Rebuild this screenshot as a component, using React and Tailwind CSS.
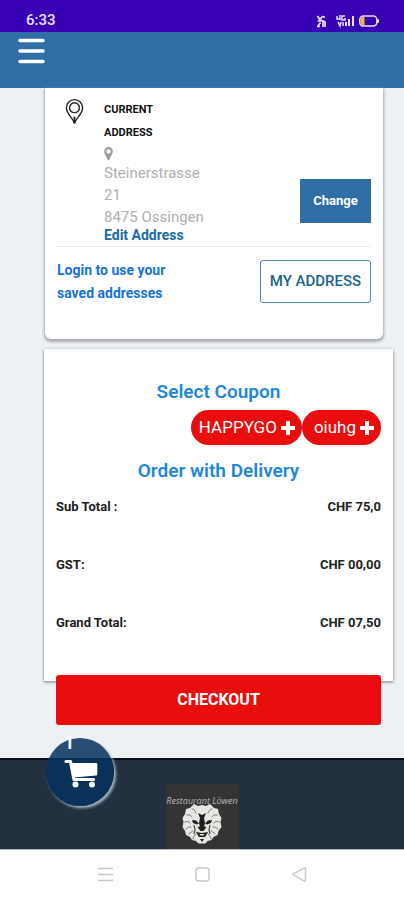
import React from "react";

function StatusBar() {
  return (
    <div className="flex h-8 items-end justify-between bg-[#3700b3] pr-6 pb-1 pl-[26px] text-[#e9e0ff]">
      <span className="text-[15px] leading-4 font-medium">6:33</span>
      <svg width="64" height="14" viewBox="0 0 64 14" fill="none" aria-hidden="true">
        <g stroke="#e9e0ff" strokeWidth="1.700">
          <path d="M1.500 2l3 4.500M7 2L3 6M1.500 7h4M1.500 12.500l3-4M7 7v6M8 2v2M5 6l4 2v5M1 12.500h3" />
          <path d="M21 2v3h3M24 1v5M29 2h-3v4h3V4M22 8l2 4 1-4M27 8v4" strokeWidth="1.500" />
        </g>
        <g fill="#e9e0ff">
          <rect x="29" y="8" width="2" height="4" />
          <rect x="32" y="5" width="2" height="7" />
          <rect x="36" y="2" width="2" height="10" />
          <rect x="61" y="5" width="2" height="4" rx="1" />
        </g>
        <rect x="43.800" y="2" width="17" height="10" rx="3.500" stroke="#e9e0ff" strokeWidth="1.500" />
        <path d="M47 3h1.500v8H47a2.500 2.500 0 0 1-2.500-2.500v-3A2.500 2.500 0 0 1 47 3z" fill="#f5b62e" />
      </svg>
    </div>
  );
}

function Header() {
  return (
    <header className="h-14 bg-[#2f6fa5] px-[18px] pt-1">
      <button type="button" aria-label="Open menu" className="block">
        <svg width="27" height="30" viewBox="0 0 27 30" stroke="#fff" strokeWidth="3.500" strokeLinecap="round">
          <path d="M2 4.500h23M2 15h23M2 25.500h23" />
        </svg>
      </button>
    </header>
  );
}

function AddressCard() {
  return (
    <section className="mr-[10px] ml-px rounded-b-md bg-white pr-3 pb-[34px] pl-3 shadow-[0_2px_3px_1px_#a9abad]">
      <div className="flex items-end justify-between border-b border-[#e8e8e8] pt-[10px] pb-1">
        <div className="flex">
          <svg className="mr-5 ml-2" width="19" height="27" viewBox="0 0 20 27" fill="none" stroke="#222" strokeWidth="1.500">
            <path d="M10 26C9 21 1.500 16.500 1.500 9.500a8.500 8.500 0 0 1 17 0C18.500 16.500 11 21 10 26z" />
            <circle cx="10" cy="9.500" r="5.200" />
            <path d="M10 19v7" strokeWidth="2" />
          </svg>
          <div className="w-[101px]">
            <h2 className="text-[11px] leading-[23px] font-bold text-[#111]">
              CURRENT
              <br />
              ADDRESS
            </h2>
            <svg className="mt-[3px] mb-px" width="9" height="14" viewBox="0 0 9 14" aria-hidden="true">
              <path fillRule="evenodd" fill="#9c9c9c" d="M4.500 0A4.300 4.300 0 0 0 .2 4.400C.2 6 1 7 3.600 12.500c.4.900 1.400.9 1.800 0C8 7 8.800 6 8.800 4.400A4.300 4.300 0 0 0 4.500 0zm0 2.200a2.200 2.200 0 1 1 0 4.400 2.200 2.200 0 0 1 0-4.400z" />
            </svg>
            <address className="text-[15px] leading-[22px] text-[#b0b0b0] not-italic">
              Steinerstrasse
              <br />
              21
              <br />
              8475 Ossingen
            </address>
            <a href="#edit" className="block text-sm leading-[14px] font-bold text-[#1b6ca5]">
              Edit Address
            </a>
          </div>
        </div>
        <button type="button" className="mb-[19px] h-11 w-[71px] bg-[#2f6fa5] text-[13px] font-bold text-white">
          Change
        </button>
      </div>
      <div className="flex justify-between pt-3">
        <p className="w-32 text-sm leading-[23px] font-bold text-[#1673dc]">Login to use your saved addresses</p>
        <button type="button" className="mt-px h-[43px] w-[111px] rounded-[3px] border border-[#4f86ad] text-[15px] font-medium text-[#22638f]">
          MY ADDRESS
        </button>
      </div>
    </section>
  );
}

function Coupon({ code, className }) {
  return (
    <button type="button" className={"flex h-[35px] items-center gap-1 rounded-full bg-[#ea0d0d] text-[17px] text-white " + className}>
      {code}
      <svg width="14" height="14" viewBox="0 0 14 14" stroke="#fff" strokeWidth="4" aria-hidden="true">
        <path d="M7 0v14M0 7h14" />
      </svg>
    </button>
  );
}

const totals = [
  ["Sub Total :", "CHF 75,0"],
  ["GST:", "CHF 00,00"],
  ["Grand Total:", "CHF 07,50"],
];

function OrderCard() {
  return (
    <section className="mt-[10px] bg-white px-3 pt-[31px] pb-12 shadow-[0_1px_3px_#777]">
      <h2 className="text-center text-[19px] leading-6 font-semibold text-[#1e87db]">Select Coupon</h2>
      <div className="mt-[6px] flex justify-end">
        <Coupon code="HAPPYGO" className="pr-[7px] pl-2" />
        <Coupon code="oiuhg" className="pr-[7px] pl-3" />
      </div>
      <h2 className="mt-[14px] text-center text-[19px] leading-6 font-semibold text-[#1e87db]">Order with Delivery</h2>
      <dl className="mt-[14px] flex flex-col gap-[38px] text-[13px] leading-5 font-bold text-[#222]">
        {totals.map(([label, value]) => (
          <div key={label} className="flex justify-between">
            <dt>{label}</dt>
            <dd>{value}</dd>
          </div>
        ))}
      </dl>
    </section>
  );
}

function CartButton() {
  return (
    <button type="button" aria-label="Cart, 1 item" className="absolute -top-[22px] left-[46px] h-[68px] w-[68px] rounded-full bg-[#06315c]/85 shadow-[2px_2px_3px_#a9bac8]">
      <span className="absolute -top-1 left-[18px] text-lg leading-[18px] font-bold text-white">1</span>
      <svg className="absolute top-[21px] left-[18px]" width="34" height="30" viewBox="0 0 34 30" fill="none" aria-hidden="true">
        <path d="M2 2.500h4.500L10 20.500h19.500" stroke="#fff" strokeWidth="3.200" strokeLinecap="round" strokeLinejoin="round" />
        <path d="M7 4h25c.8 0 1.300.5 1.300 1.200v10c0 .7-.4 1.200-1 1.300L10 18.500z" fill="#fff" />
        <circle cx="11.500" cy="25.500" r="3" fill="#fff" />
        <circle cx="28" cy="25.500" r="3" fill="#fff" />
      </svg>
    </button>
  );
}

function LionLogo() {
  return (
    <div className="flex h-[65px] w-[73px] flex-col items-center bg-[#343434] pt-3">
      <span className="font-['Open_Sans',sans-serif] text-[9px] leading-[10px] whitespace-nowrap text-[#b9b9b9] italic">Restaurant Löwen</span>
      <svg className="-mt-[3px]" width="40" height="42" viewBox="0 0 40 42" aria-hidden="true">
        <path fill="#e6e6e2" d="M20 2l4 1 4-2 4 4 4 1 1 5 2.500 4-1 4 1 5-3 4-1 4-4 2-2 3-4 1-2 2.500h-7L14 38l-4-1-2-3-4-2-1-4-2.500-4 1-5-1-4L3 11l1-5 4-1 4-4 4 2z" />
        <g fill="none" stroke="#777" strokeWidth="1" strokeLinecap="round">
          <path d="M10 6c2 0 3 2 4 4M5 12c3-1 4 1 5 2M3 19c2-1 4-1 5 1M4 26c2-2 3-2 5-2M7 31c1-2 3-2 4-3M11 36c0-3 2-3 3-5M30 6c-2 0-3 2-4 4M35 12c-3-1-4 1-5 2M37 19c-2-1-4-1-5 1M36 26c-2-2-3-2-5-2M33 31c-1-2-3-2-4-3M29 36c0-3-2-3-3-5" />
        </g>
        <path fill="#1e1e1e" d="M16 10l4 2 4-2-2 5 1 5-1 4h-4l-1-4 1-5zM10 17l4 .5 3 3-2 1-4-1.500zM30 17l-4 .5-3 3 2 1 4-1.500zM15.500 24l4.500-1 4.500 1-3 4h-3zM14 29l6 1 6-1-3 5h-6zM18 36h4l-2 3z" />
        <path fill="none" stroke="#444" strokeWidth="1.200" d="M12 22l1 5-1 4M28 22l-1 5 1 4" />
        <path fill="#e6e6e2" d="M17.500 31h5l-1 1.500h-3z" />
      </svg>
    </div>
  );
}

function Footer() {
  return (
    <footer className="relative flex h-[91px] items-end justify-center border-t-2 border-[#080f18] bg-[#22303f]">
      <CartButton />
      <LionLogo />
    </footer>
  );
}

function NavBar() {
  const button = "block text-[#c8c8c8]";
  return (
    <nav className="flex h-[50px] items-center justify-between border-t border-[#b6bcc2] bg-white pr-[97px] pl-[98px]">
      <button type="button" aria-label="Recent apps" className={button}>
        <svg width="15" height="15" viewBox="0 0 15 15" stroke="currentColor" strokeWidth="1.500">
          <path d="M0 1.500h15M0 7.500h15M0 13.500h15" />
        </svg>
      </button>
      <button type="button" aria-label="Home" className={button}>
        <svg width="15" height="15" viewBox="0 0 15 15" fill="none" stroke="currentColor" strokeWidth="1.500">
          <rect x="1" y="1" width="13" height="13" rx="3" />
        </svg>
      </button>
      <button type="button" aria-label="Back" className={button}>
        <svg width="15" height="15" viewBox="0 0 15 15" fill="none" stroke="currentColor" strokeWidth="1.500" strokeLinejoin="round">
          <path d="M13.500 2v11c0 1-1 1.200-1.600.8L1.500 8.200a.8.800 0 0 1 0-1.400L11.900 1.200c.6-.4 1.600-.2 1.600.8z" />
        </svg>
      </button>
    </nav>
  );
}

export default function App() {
  return (
    <div className="bg-[#edf1f4] font-[Roboto,sans-serif]">
      <StatusBar />
      <Header />
      <main className="pr-[11px] pb-[33px] pl-11">
        <AddressCard />
        <OrderCard />
        <div className="-mt-[6px] px-3">
          <button type="button" className="relative block h-[50px] w-full rounded-[3px] bg-[#ea0d0d] text-base font-bold text-white">
            CHECKOUT
          </button>
        </div>
      </main>
      <Footer />
      <NavBar />
    </div>
  );
}
